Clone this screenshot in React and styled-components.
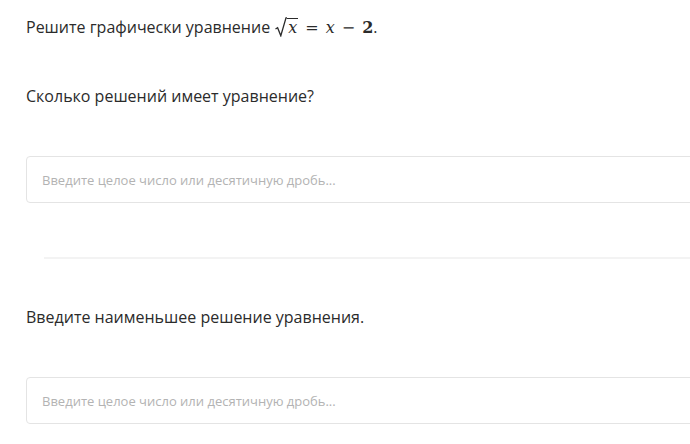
import React from "react";
import styled, { createGlobalStyle } from "styled-components";

const GlobalStyle = createGlobalStyle`
  html, body {
    margin: 0;
    padding: 0;
    background: #ffffff;
    overflow: hidden;
  }
  body {
    font-family: "Open Sans", "Noto Sans", sans-serif;
    color: #2b2b2b;
  }
`;

export default function App() {
  return (
    <>
      <GlobalStyle />
      <Page>
        <Title>
          Решите графически уравнение{" "}
          <MathExpr>
            <RadicalSign viewBox="0 0 12 20" aria-hidden="true">
              <path d="M0.5 12 L2.6 10.8 L5.8 18.8 L11 0.8 L12 0.8" />
            </RadicalSign>
            <RadicalBody>
              <MathVar>x</MathVar>
            </RadicalBody>
            <MathOp>=</MathOp>
            <MathVar>x</MathVar>
            <MathOp>−</MathOp>
            <MathNum>2</MathNum>
          </MathExpr>
          .
        </Title>

        <Question>
          <QuestionText>Сколько решений имеет уравнение?</QuestionText>
          <AnswerInput placeholder="Введите целое число или десятичную дробь..." />
        </Question>

        <Divider />

        <Question $top={46}>
          <QuestionText>Введите наименьшее решение уравнения.</QuestionText>
          <AnswerInput placeholder="Введите целое число или десятичную дробь..." />
        </Question>
      </Page>
    </>
  );
}

/* STYLES */
const Page = styled.div`
  display: flex;
  flex-direction: column;
  padding: 15px 0 0 26px;
  width: 700px;
`;

const Title = styled.p`
  margin: 0;
  font-size: 16px;
  line-height: 24px;
  color: #2b2b2b;
`;

const MathExpr = styled.span`
  font-family: "DejaVu Serif", "Liberation Serif", serif;
  font-size: 16px;
  margin-left: 1px;
`;

const RadicalSign = styled.svg`
  display: inline-block;
  width: 12px;
  height: 20px;
  vertical-align: -4px;
  fill: none;
  stroke: #2b2b2b;
  stroke-width: 1.3;
`;

const RadicalBody = styled.span`
  display: inline-block;
  border-top: 1.3px solid #2b2b2b;
  padding: 1px 1px 0 1px;
  line-height: 1;
`;

const MathVar = styled.span`
  font-style: italic;
`;

const MathOp = styled.span`
  margin: 0 7px;
`;

const MathNum = styled.span`
  font-weight: bold;
`;

const Question = styled.div`
  display: flex;
  flex-direction: column;
  gap: 48px;
  margin-top: ${(p) => p.$top ?? 44}px;
`;

const QuestionText = styled.p`
  margin: 0;
  font-size: 16px;
  line-height: 24px;
  color: #2b2b2b;
`;

const AnswerInput = styled.input`
  box-sizing: border-box;
  width: 100%;
  height: 47px;
  border: 1px solid #e4e4e4;
  border-radius: 4px;
  padding: 0 15px;
  font-family: "Open Sans", "Noto Sans", sans-serif;
  font-size: 13px;
  color: #2b2b2b;
  outline: none;

  &::placeholder {
    color: #b3b3b3;
  }
`;

const Divider = styled.hr`
  margin: 54px 0 0 18px;
  border: none;
  height: 2px;
  background: #f3f3f3;
`;
